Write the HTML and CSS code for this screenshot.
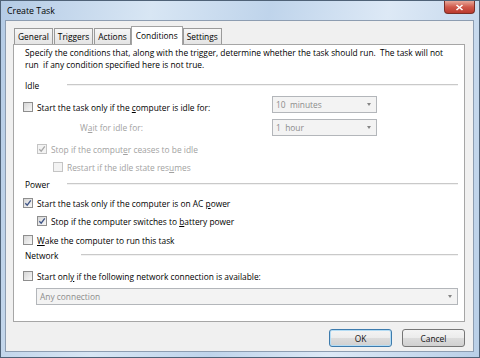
FILE: index.html
```html
<!DOCTYPE html>
<html lang="en">
<head>
    <meta charset="UTF-8">
    <title>Create Task</title>
    <link rel="stylesheet" href="styles.css">
</head>
<body>
    <div class="window">
        <div class="titlebar">
            <span class="title">Create Task</span>
            <span class="close">
                <svg width="9" height="7" viewBox="0 0 9 7"><path d="M1.5 1 L7.5 6 M7.5 1 L1.5 6" stroke="#fff" stroke-width="1.6"/></svg>
            </span>
        </div>

        <div class="client">
            <div class="tabs">
                <div class="tab">General</div>
                <div class="tab">Triggers</div>
                <div class="tab">Actions</div>
                <div class="tab active">Conditions</div>
                <div class="tab">Settings</div>
            </div>

            <div class="panel">
                <p class="intro">Specify the conditions that, along with the trigger, determine whether the task should run.&nbsp; The task will not<br>run&nbsp; if any condition specified here is not true.</p>

                <div class="group"><span class="group-name">Idle</span><span class="rule"></span></div>

                <div class="field row-idle">
                    <label class="check"><span class="cb"></span><span>Start the task only if the <u>c</u>omputer is idle for:</span></label>
                    <div class="combo">10&nbsp; minutes</div>
                </div>
                <div class="field row-wait">
                    <span class="wait-label">W<u>a</u>it for idle for:</span>
                    <div class="combo">1&nbsp; hour</div>
                </div>

                <label class="check row indent-1 gap-3 disabled"><span class="cb on"><svg width="8" height="8" viewBox="0 0 8 8"><path d="M1.3 4.2 L3.2 6.2 L6.8 1.4" fill="none" stroke="#a8a8a8" stroke-width="1.3"/></svg></span><span>Stop if the comput<u>e</u>r ceases to be idle</span></label>
                <label class="check row indent-2 disabled"><span class="cb"></span><span>Restart if the idle state res<u>u</u>mes</span></label>

                <div class="group group-power"><span class="group-name">Power</span><span class="rule"></span></div>

                <label class="check row gap-2"><span class="cb on"><svg width="8" height="8" viewBox="0 0 8 8"><path d="M1.3 4.2 L3.2 6.2 L6.8 1.4" fill="none" stroke="#3e5486" stroke-width="1.3"/></svg></span><span>Start the task only if the computer is on AC <u>p</u>ower</span></label>
                <label class="check row indent-1"><span class="cb on"><svg width="8" height="8" viewBox="0 0 8 8"><path d="M1.3 4.2 L3.2 6.2 L6.8 1.4" fill="none" stroke="#3e5486" stroke-width="1.3"/></svg></span><span>Stop if the computer switches to <u>b</u>attery power</span></label>
                <label class="check row gap-1"><span class="cb"></span><span><u>W</u>ake the computer to run this task</span></label>

                <div class="group group-network"><span class="group-name">Network</span><span class="rule"></span></div>

                <label class="check row gap-6"><span class="cb"></span><span>Start onl<u>y</u> if the following network connection is available:</span></label>
                <div class="combo combo-wide">Any connection</div>
            </div>

            <div class="buttons">
                <button class="btn default">OK</button>
                <button class="btn">Cancel</button>
            </div>
        </div>
    </div>
</body>
</html>
```

FILE: styles.css
```css
body {
    margin: 0;
    font-family: "Open Sans", "Noto Sans", sans-serif;
    font-size: 8.4px;
    color: #000;
}

.window {
    width: 480px;
    height: 358px;
    box-sizing: border-box;
    display: flex;
    flex-direction: column;
    border: 1px solid #4f6277;
    background: linear-gradient(100deg, #b4cbe5 0%, #d8e6f4 28%, #bfd4eb 50%, #dde9f6 72%, #b9cfe7 100%);
}

.titlebar {
    height: 19px;
    display: flex;
    align-items: center;
    padding-left: 6px;
}

.title {
    font-size: 8.8px;
    color: #000;
}

.close {
    margin-left: auto;
    margin-right: 4px;
    align-self: flex-start;
    width: 31px;
    height: 13px;
    box-sizing: border-box;
    display: flex;
    justify-content: center;
    align-items: center;
    border: 1px solid #7a2f27;
    border-top: none;
    border-radius: 0 0 4px 4px;
    background: linear-gradient(#e7a899, #d0594b 50%, #bb3a2e);
}

.client {
    flex: 1;
    margin: 0 5px 5px 4px;
    display: flex;
    flex-direction: column;
    padding: 5px 8px 0 7px;
    background: #f0f0f0;
    border: 1px solid #8d9db1;
}

/* tabs */
.tabs {
    display: flex;
    align-items: flex-end;
    height: 18px;
    padding-left: 1px;
    position: relative;
    z-index: 1;
}

.tab {
    height: 16px;
    box-sizing: border-box;
    padding: 0 3px;
    margin-right: 1px;
    display: flex;
    align-items: center;
    border: 1px solid #9a9a9a;
    border-bottom: none;
    background: linear-gradient(#f6f6f6, #e4e4e4);
}

.tab.active {
    height: 19px;
    margin: 0 0 -1px -1px;
    padding: 0 4px 2px;
    background: #fff;
    border-color: #a3a3a3;
}

.panel {
    height: 278px;
    box-sizing: border-box;
    padding: 2px 6px 0 9px;
    background: #fff;
    border: 1px solid #a6a6a6;
}

.intro {
    margin: 0 0 0 2px;
    line-height: 12px;
}

/* group headings */
.group {
    display: flex;
    align-items: center;
    height: 20px;
    margin-top: 4px;
    padding-left: 2px;
}

.group-name {
    width: 42px;
}

.rule {
    flex: 1;
    height: 1px;
    background: #c9c9c9;
    border-bottom: 1px solid #f2f2f2;
}

.group-power {
    height: 16px;
    margin-top: 0;
}

.group-network {
    height: 12px;
    margin-top: 0;
}

.group-network .group-name {
    width: 56px;
}

/* checkbox rows */
.check {
    display: flex;
    align-items: center;
}

.row {
    height: 18px;
}

.cb {
    width: 10px;
    height: 10px;
    box-sizing: border-box;
    flex: none;
    margin-right: 4px;
    display: flex;
    justify-content: center;
    align-items: center;
    border: 1px solid #8e8e8e;
    background: linear-gradient(135deg, #d6d6d6, #f8f8f8);
}

.disabled {
    color: #a2a2a2;
}

.disabled .cb {
    border-color: #c4c4c4;
    background: #f3f3f3;
}

.indent-1 { margin-left: 14px; }
.indent-2 { margin-left: 30px; }
.gap-1 { margin-top: 1px; }
.gap-2 { margin-top: 2px; }
.gap-3 { margin-top: 3px; }
.gap-6 { margin-top: 6px; }

/* idle fields */
.field {
    display: grid;
    grid-template-columns: 249px 105px;
    align-items: center;
}

.row-idle {
    height: 22px;
    margin-top: 1px;
}

.row-idle .combo {
    align-self: start;
}

.row-wait {
    height: 19px;
}

.row-wait .combo {
    align-self: start;
    margin-top: 1px;
}

.wait-label {
    padding-left: 57px;
    color: #a2a2a2;
}

.combo {
    height: 17px;
    box-sizing: border-box;
    display: flex;
    align-items: center;
    padding-left: 3px;
    color: #8c8c8c;
    background: #f3f3f3;
    border: 1px solid #b3b6ba;
}

.combo::after {
    content: "";
    margin-left: auto;
    margin-right: 5px;
    border-left: 2.5px solid transparent;
    border-right: 2.5px solid transparent;
    border-top: 3px solid #858585;
}

.combo-wide {
    margin: 3px 0 0 13px;
}

/* buttons */
.buttons {
    display: flex;
    justify-content: flex-end;
    gap: 10px;
    margin-top: 7px;
}

.btn {
    width: 63px;
    height: 18px;
    padding: 0;
    font-family: inherit;
    font-size: 8.4px;
    color: #111;
    border: 1px solid #767676;
    border-radius: 3px;
    background: linear-gradient(#f4f4f4, #ececec 48%, #dcdcdc 52%, #d0d0d0);
}

.btn.default {
    border-color: #3d7bad;
    box-shadow: inset 0 0 0 1px #b4dcf4;
}
```
